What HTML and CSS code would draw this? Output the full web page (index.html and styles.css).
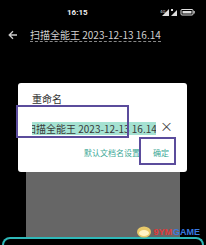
FILE: index.html
```html
<!DOCTYPE html>
<html>
<head>
<meta charset="utf-8">
<link rel="stylesheet" href="styles.css">
</head>
<body>
<div class="screen">
  <div class="status">
    <span class="time">16:15</span>
    <span class="sicons">
      <svg width="36" height="8" viewBox="0 0 36 8">
        <text x="0" y="5" font-size="4" fill="#ddd" font-family="DejaVu Sans">4G</text>
        <polygon points="2,8 9,8 9,1" fill="#ddd"/>
        <polygon points="11,8 17,8 17,2" fill="#ddd"/>
        <rect x="11" y="1" width="2" height="2" fill="#ddd"/>
        <rect x="21" y="1.5" width="12" height="5.5" rx="1" fill="none" stroke="#ddd" stroke-width="1"/>
        <rect x="22.5" y="3" width="9" height="2.5" fill="#ddd"/>
        <rect x="33.5" y="3" width="1.2" height="2.5" fill="#ddd"/>
      </svg>
    </span>
  </div>
  <div class="header">
    <svg class="back" width="10" height="10" viewBox="0 0 10 10"><path d="M9 5H1.5M5 1.2L1.2 5L5 8.8" fill="none" stroke="#ccc" stroke-width="1.3"/></svg>
    <span class="title">扫描全能王 2023-12-13 16.14</span>
  </div>
  <div class="stage">
    <div class="dialog">
      <div class="dtitle">重命名</div>
      <div class="inputrow">
        <div class="input"><span class="sel">扫描全能王 2023-12-13 16.14</span></div>
        <span class="clear">×</span>
      </div>
      <div class="actions">
        <span class="btn">默认文档名设置</span>
        <span class="btn ok">确定</span>
      </div>
      <div class="mark mark1"></div>
      <div class="mark mark2"></div>
    </div>
    <div class="doc"></div>
    <div class="bar"></div>
    <div class="wm">
      <svg width="16" height="12" viewBox="0 0 16 12"><ellipse cx="8" cy="6" rx="7" ry="5.5" fill="#e8c96a"/><ellipse cx="8" cy="7" rx="5" ry="3" fill="#fff3c4"/></svg>
      <span class="r">9YM</span><span class="b">GAME</span>
    </div>
  </div>
</div>
</body>
</html>
```
FILE: styles.css
```css
html, body { margin: 0; padding: 0; background: #000; }
.screen {
  width: 206px; height: 245px; overflow: hidden; background: #000;
  font-family: "Noto Sans CJK SC", "Noto Sans", sans-serif;
  display: flex; flex-direction: column;
}
.status { height: 24px; display: flex; align-items: center; flex-shrink: 0; }
.time { margin-left: 67px; color: #eee; font-size: 8px; font-weight: bold; font-family: "Roboto", sans-serif; }
.sicons { margin-left: auto; margin-right: 10px; display: flex; }
.header { height: 22px; display: flex; align-items: center; flex-shrink: 0; }
.back { margin-left: 8px; }
.title {
  margin-left: 12px; color: #d0d0d0; font-size: 10px; white-space: nowrap;
  border-bottom: 1px dashed #888; line-height: 12px;
}
.stage { position: relative; flex: 1; min-height: 0; display: flex; flex-direction: column; }
.dialog {
  position: relative; margin: 37px 0 0 18px; width: 169px; height: 89px; flex-shrink: 0;
  background: #fff; border-radius: 3px; box-sizing: border-box; padding: 10px 0 0 14px;
  display: flex; flex-direction: column;
}
.dtitle { font-size: 10px; color: #333; line-height: 12px; }
.inputrow { display: flex; align-items: center; margin-top: 14px; height: 14px; }
.input { width: 124px; overflow: hidden; white-space: nowrap; flex-shrink: 0; }
.sel { display: inline-block; background: #a5e2d2; color: #3a3a3a; font-size: 10px; line-height: 13px; margin-left: -6px; }
.clear { margin-left: 4px; font-size: 13px; color: #444; line-height: 12px; }
.actions { display: flex; gap: 13px; margin-top: 15px; padding-left: 52px; }
.btn { font-size: 8px; color: #3aa895; line-height: 10px; }
.mark { position: absolute; border: 2px solid #5b4c9c; box-sizing: border-box; }
.mark1 { left: -2px; top: 22px; width: 113px; height: 33px; }
.mark2 { left: 121px; top: 54px; width: 37px; height: 28px; }
.doc { margin-left: 26px; width: 154px; height: 65px; flex-shrink: 0; background: #666; }
.bar {
  margin: 0 2px; height: 12px; flex-shrink: 0; border: 2px solid #2fb8b8; border-bottom: none;
  border-radius: 8px 8px 0 0;
}
.wm {
  position: absolute; right: 6px; top: 180px; display: flex; align-items: center; gap: 1px;
  font-size: 9px; font-weight: bold; font-family: "Liberation Sans", sans-serif; line-height: 10px;
}
.wm .r { color: #e03a3a; }
.wm .b { color: #3a7be0; }
```
